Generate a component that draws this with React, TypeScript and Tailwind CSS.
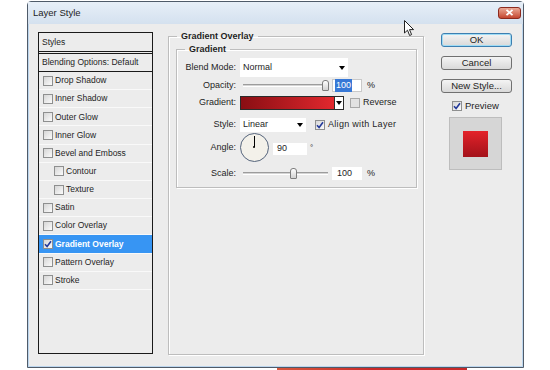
import React from 'react'

type Fx = { name: string; sub?: boolean; on?: boolean }

const EFFECTS: Fx[] = [
  { name: 'Drop Shadow' }, { name: 'Inner Shadow' }, { name: 'Outer Glow' }, { name: 'Inner Glow' },
  { name: 'Bevel and Emboss' }, { name: 'Contour', sub: true }, { name: 'Texture', sub: true },
  { name: 'Satin' }, { name: 'Color Overlay' }, { name: 'Gradient Overlay', on: true },
  { name: 'Pattern Overlay' }, { name: 'Stroke' },
]

function Check({ on, dim }: { on?: boolean; dim?: boolean }) {
  return (
    <span className={`flex h-[10px] w-[10px] shrink-0 items-center justify-center border ${dim ? 'border-[#a8a8a8] bg-[#e2e2e2]' : 'border-[#8e8f8f] bg-linear-to-br from-[#d6d6d6] to-[#fbfbfb]'}`}>
      {on && (
        <svg width="8" height="8" viewBox="0 0 8 8">
          <path d="M1 4.2 L3.1 6.5 L7 1.2" fill="none" stroke="#23399a" strokeWidth="1.6" />
        </svg>
      )}
    </span>
  )
}

function Caret() {
  return <span className="h-0 w-0 border-x-[3.5px] border-t-[4px] border-x-transparent border-t-black" />
}

function Slider({ thumb }: { thumb: string }) {
  return (
    <div className="relative ml-[3px] h-[3px] w-[85px] border-y border-t-[#9c9c9c] border-b-white bg-[#d4d4d4]">
      <span className={`absolute top-[-5px] h-[11px] w-[7px] rounded-t-[3px] rounded-b-[1px] border border-[#7d7d7d] bg-linear-to-b from-white to-[#d2d2d2] ${thumb}`} />
    </div>
  )
}

function Row({ label, cls, children }: { label: string; cls: string; children: React.ReactNode }) {
  return (
    <div className={`flex items-center ${cls}`}>
      <span className="w-[59px] text-right">{label}</span>
      <div className="ml-[4px] flex items-center">{children}</div>
    </div>
  )
}

function Btn({ label, focus }: { label: string; focus?: boolean }) {
  return (
    <div className={`flex h-[14px] w-[71px] items-center justify-center rounded-[3px] border bg-linear-to-b from-[#f4f4f4] to-[#d9d9d9] text-[9.5px] ${focus ? 'border-[#3c7fb1] shadow-[inset_0_0_0_1px_#9fdcf5]' : 'border-[#707070]'}`}>
      {label}
    </div>
  )
}

export default function App() {
  return (
    <div className="relative h-[370px] w-[550px] overflow-hidden bg-white font-['Liberation_Sans',Arial,sans-serif] text-[#1e1e1e]">
      <div className="ml-[27px] mt-[1px] flex h-[367px] w-[497px] flex-col rounded-t-[4px] border border-[#4f5b69] bg-[#bcd6ee]">
        {/* title bar */}
        <div className="flex h-[22px] shrink-0 items-center justify-between bg-linear-to-b from-[#e7eff8] to-[#d4e1ef] pl-[5px] pr-[2px]">
          <span className="text-[9.5px]">Layer Style</span>
          <div className="mt-[-1px] flex h-[12px] w-[23px] items-center justify-center rounded-[3px] border border-[#8c2a1e] bg-linear-to-b from-[#eaa895] to-[#c4452f]">
            <svg width="9" height="7" viewBox="0 0 9 7">
              <path d="M1.5 0.8 L7.5 6.2 M7.5 0.8 L1.5 6.2" stroke="#fff" strokeWidth="1.8" />
            </svg>
          </div>
        </div>

        <div className="mx-[1px] mb-[1px] flex flex-1 items-start bg-[#ececec] pl-[9px] pt-[8px]">
          {/* styles list */}
          <div className="flex h-[322px] w-[115px] shrink-0 flex-col border border-[#1a1a1a] text-[8.5px]">
            <div className="flex h-[21px] shrink-0 items-center border-b-[3px] border-double border-[#1a1a1a] pl-[3px]">Styles</div>
            <div className="flex h-[18px] shrink-0 items-center border-b border-[#1a1a1a] pl-[3px]">Blending Options: Default</div>
            {EFFECTS.map(fx => (
              <div
                key={fx.name}
                className={`flex h-[18.17px] shrink-0 items-center gap-[2px] border-b border-[#f9f9f9] ${fx.sub ? 'pl-[15px]' : 'pl-[4px]'} ${fx.on ? 'bg-[#3795f3] font-bold text-white' : ''}`}
              >
                <Check on={fx.on} />
                <span>{fx.name}</span>
              </div>
            ))}
          </div>

          {/* Gradient Overlay */}
          <fieldset className="ml-[15px] mt-[-1px] h-[324px] w-[256px] shrink-0 border border-[#bdbdbd] shadow-[inset_1px_1px_0_#fff,1px_1px_0_#fff]">
            <legend className="ml-[8px] px-[4px] text-[9px] font-bold leading-[11px]">Gradient Overlay</legend>
            <fieldset className="ml-[7px] mt-[2px] w-[241px] border border-[#bdbdbd] pb-[7px] text-[9px] shadow-[inset_1px_1px_0_#fff,1px_1px_0_#fff]">
              <legend className="ml-[8px] px-[4px] font-bold leading-[11px]">Gradient</legend>

              <Row label="Blend Mode:" cls="mt-[3px] h-[19px]">
                <div className="flex h-[19px] w-[108px] items-center justify-between bg-white pl-[3px] pr-[3px]">
                  <span>Normal</span>
                  <Caret />
                </div>
              </Row>

              <Row label="Opacity:" cls="mt-[2px] h-[13px]">
                <Slider thumb="left-[79px]" />
                <div className="ml-[4px] flex h-[13px] w-[30px] items-center border border-[#c9c9c9] bg-white pl-[2px]">
                  <span className="bg-[#3778d6] px-[1px] text-white">100</span>
                </div>
                <span className="ml-[5px]">%</span>
              </Row>

              <Row label="Gradient:" cls="mt-[4px] h-[14px]">
                <div className="h-[14px] w-[95px] border border-[#2b2b2b] bg-linear-to-r from-[#8a0e13] to-[#e2282e]" />
                <div className="flex h-[14px] w-[9px] items-center justify-center border border-l-0 border-[#2b2b2b] bg-white">
                  <Caret />
                </div>
                <span className="ml-[6px]"><Check dim /></span>
                <span className="ml-[3px]">Reverse</span>
              </Row>

              <Row label="Style:" cls="mt-[7px] h-[15px]">
                <div className="flex h-[14px] w-[66px] items-center justify-between bg-white pl-[3px] pr-[3px]">
                  <span>Linear</span>
                  <Caret />
                </div>
                <span className="ml-[9px]"><Check on /></span>
                <span className="ml-[3px] tracking-[0.3px]">Align with Layer</span>
              </Row>

              <Row label="Angle:" cls="mt-[1px] h-[29px]">
                <div className="relative h-[29px] w-[29px] rounded-full border-[1.5px] border-[#55647c] bg-[#f3f1ea]">
                  <span className="absolute left-[12.5px] top-[2px] h-[11px] w-[1px] bg-black" />
                  <span className="absolute left-[11.5px] top-[12px] h-[2px] w-[2px] rounded-full bg-black" />
                </div>
                <div className="ml-[4px] mt-[3px] flex h-[12px] w-[34px] items-center bg-white pl-[4px]">90</div>
                <span className="ml-[3px] mt-[9px] self-start text-[8px]">°</span>
              </Row>

              <Row label="Scale:" cls="mt-[5px] h-[13px]">
                <Slider thumb="left-[47px]" />
                <div className="ml-[4px] flex h-[13px] w-[30px] items-center bg-white pl-[5px]">100</div>
                <span className="ml-[5px]">%</span>
              </Row>
            </fieldset>
          </fieldset>

          {/* buttons */}
          <div className="ml-[17px] mt-[1px] flex w-[71px] shrink-0 flex-col gap-[9px]">
            <Btn label="OK" focus />
            <Btn label="Cancel" />
            <Btn label="New Style..." />
            <div className="mt-[-1px] flex items-center gap-[3px] pl-[11px] text-[9.5px] leading-none">
              <Check on />
              <span>Preview</span>
            </div>
            <div className="ml-[8px] mt-[-3px] flex h-[53px] w-[53px] items-center justify-center border border-[#bdbdbd] bg-[#d6d6d6]">
              <div className="h-[26px] w-[25px] bg-linear-to-b from-[#e4222a] to-[#a3121a]" />
            </div>
          </div>
        </div>
      </div>
      <div className="ml-[277px] h-[2px] w-[190px] bg-linear-to-r from-[#d8573d] via-[#cb2a2a] to-[#c82a2a]" />

      {/* mouse pointer */}
      <svg className="absolute left-[404px] top-[20px]" width="11" height="17" viewBox="0 0 11 17">
        <path d="M0.5 0.5 L0.5 13 L3.5 10.2 L5.6 15.5 L7.6 14.6 L5.5 9.6 L9.6 9.6 Z" fill="#fff" stroke="#222" strokeWidth="1" strokeLinejoin="round" />
      </svg>
    </div>
  )
}
